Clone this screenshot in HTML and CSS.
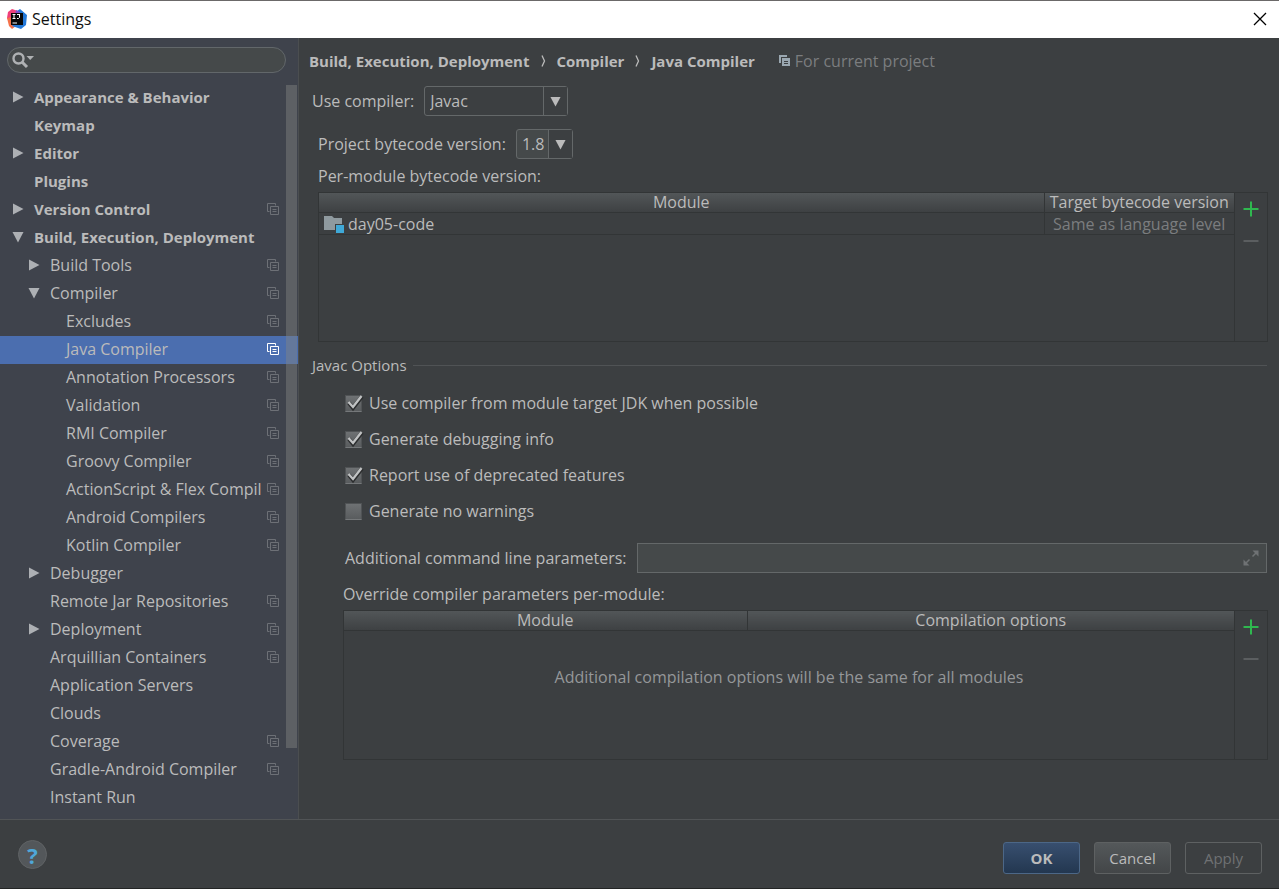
FILE: index.html
```html
<!DOCTYPE html>
<html lang="en">
<head>
    <meta charset="UTF-8">
    <meta name="viewport" content="width=device-width, initial-scale=1.0">
    <title>Settings</title>
    <link rel="stylesheet" href="styles.css">
</head>
<body>
    <svg class="sprite" width="0" height="0" aria-hidden="true">
        <symbol id="right" viewBox="0 0 12 12"><path d="M1 0.5 L11.5 6 L1 11.5 Z" fill="currentColor"/></symbol>
        <symbol id="down" viewBox="0 0 12 12"><path d="M0.5 1 H11.5 L6 11.5 Z" fill="currentColor"/></symbol>
        <symbol id="copy" viewBox="0 0 14 14">
            <path d="M3.5 9.5 H1.5 V1.5 H9.5 V3.5 M4.5 4.5 H12.5 V12.5 H4.5 Z M6.5 7.5 H10.5 M6.5 9.5 H10.5" fill="none" stroke="currentColor"/>
        </symbol>
        <symbol id="check" viewBox="0 0 20 20">
            <path d="M4 8 L8 13 L17 1.5" fill="none" stroke="#2b2d2e" stroke-width="4"/>
            <path d="M3.5 7 L8 12 L16.5 1" fill="none" stroke="#c0c2c3" stroke-width="2.4"/>
        </symbol>
        <symbol id="plus" viewBox="0 0 16 16"><path d="M8 0.5 V15.5 M0.5 8 H15.5" stroke="#2fb84f" stroke-width="2"/></symbol>
        <symbol id="minus" viewBox="0 0 16 16"><path d="M0.5 8 H15.5" stroke="#5b5e60" stroke-width="2"/></symbol>
    </svg>

    <header class="titlebar">
        <svg class="logo" width="20" height="20" viewBox="0 0 20 20" aria-hidden="true">
            <path d="M1 3 L5 0 L11 2 L10 10 L3 14 L0 9 Z" fill="#f0407a"/>
            <path d="M0 9 L5 8 L9 17 L5 20 L2 17 Z" fill="#f5724a"/>
            <path d="M10 2 L13 0 L20 6 L19 16 L14 20 L5 17 L11 9 Z" fill="#2479d8"/>
            <path d="M9 1 L13 3 L12 8 L8 6 Z" fill="#8650c8"/>
            <rect x="4" y="4" width="12" height="12" fill="#080808"/>
            <path d="M5.5 5.5 H8.5 M7 5.5 V9.5 M5.5 9.5 H8.5 M10 5.5 H13 M12.5 5.5 V8.5 L11.5 9.5 H10 M5.5 14 H10" fill="none" stroke="#fff"/>
        </svg>
        <span>Settings</span>
        <button class="close" aria-label="Close">
            <svg width="14" height="14" viewBox="0 0 14 14"><path d="M1 1 L13 13 M13 1 L1 13" stroke="#000" stroke-width="1.3"/></svg>
        </button>
    </header>

    <div class="content">
        <aside class="sidebar">
            <div class="search">
                <svg width="24" height="18" viewBox="0 0 24 18" aria-hidden="true">
                    <circle cx="6.5" cy="7.5" r="5" fill="none" stroke="#afb1b3" stroke-width="2.4"/>
                    <path d="M10 11 L15 16" stroke="#afb1b3" stroke-width="3"/>
                    <path d="M14.5 5 H22 L18.2 9 Z" fill="#afb1b3"/>
                </svg>
                <input type="text" aria-label="Search settings">
            </div>
            <nav class="tree">
                <a href="#" class="top"><svg class="arrow"><use href="#right"/></svg><span>Appearance &amp; Behavior</span></a>
                <a href="#" class="top leaf"><span>Keymap</span></a>
                <a href="#" class="top"><svg class="arrow"><use href="#right"/></svg><span>Editor</span></a>
                <a href="#" class="top leaf"><span>Plugins</span></a>
                <a href="#" class="top"><svg class="arrow"><use href="#right"/></svg><span>Version Control</span><svg class="copy"><use href="#copy"/></svg></a>
                <a href="#" class="top"><svg class="arrow"><use href="#down"/></svg><span>Build, Execution, Deployment</span></a>
                <a href="#" class="sub"><svg class="arrow"><use href="#right"/></svg><span>Build Tools</span><svg class="copy"><use href="#copy"/></svg></a>
                <a href="#" class="sub"><svg class="arrow"><use href="#down"/></svg><span>Compiler</span><svg class="copy"><use href="#copy"/></svg></a>
                <a href="#" class="item"><span>Excludes</span><svg class="copy"><use href="#copy"/></svg></a>
                <a href="#" class="item selected"><span>Java Compiler</span><svg class="copy"><use href="#copy"/></svg></a>
                <a href="#" class="item"><span>Annotation Processors</span><svg class="copy"><use href="#copy"/></svg></a>
                <a href="#" class="item"><span>Validation</span><svg class="copy"><use href="#copy"/></svg></a>
                <a href="#" class="item"><span>RMI Compiler</span><svg class="copy"><use href="#copy"/></svg></a>
                <a href="#" class="item"><span>Groovy Compiler</span><svg class="copy"><use href="#copy"/></svg></a>
                <a href="#" class="item"><span>ActionScript &amp; Flex Compil</span><svg class="copy"><use href="#copy"/></svg></a>
                <a href="#" class="item"><span>Android Compilers</span><svg class="copy"><use href="#copy"/></svg></a>
                <a href="#" class="item"><span>Kotlin Compiler</span><svg class="copy"><use href="#copy"/></svg></a>
                <a href="#" class="sub"><svg class="arrow"><use href="#right"/></svg><span>Debugger</span></a>
                <a href="#" class="sub leaf"><span>Remote Jar Repositories</span><svg class="copy"><use href="#copy"/></svg></a>
                <a href="#" class="sub"><svg class="arrow"><use href="#right"/></svg><span>Deployment</span><svg class="copy"><use href="#copy"/></svg></a>
                <a href="#" class="sub leaf"><span>Arquillian Containers</span><svg class="copy"><use href="#copy"/></svg></a>
                <a href="#" class="sub leaf"><span>Application Servers</span></a>
                <a href="#" class="sub leaf"><span>Clouds</span></a>
                <a href="#" class="sub leaf"><span>Coverage</span><svg class="copy"><use href="#copy"/></svg></a>
                <a href="#" class="sub leaf"><span>Gradle-Android Compiler</span><svg class="copy"><use href="#copy"/></svg></a>
                <a href="#" class="sub leaf"><span>Instant Run</span></a>
                <div class="scrollbar"></div>
            </nav>
        </aside>

        <main class="page">
            <div class="breadcrumb">
                <b>Build, Execution, Deployment</b>
                <svg class="sep" width="5" height="12" viewBox="0 0 5 12"><path d="M1 0.5 L3.5 6 L1 11.5" fill="none" stroke="currentColor" stroke-width="1.3"/></svg>
                <b>Compiler</b>
                <svg class="sep" width="5" height="12" viewBox="0 0 5 12"><path d="M1 0.5 L3.5 6 L1 11.5" fill="none" stroke="currentColor" stroke-width="1.3"/></svg>
                <b>Java Compiler</b>
                <span class="scope">
                    <svg width="14" height="14" viewBox="0 0 14 14" aria-hidden="true">
                        <path d="M1 1 H9 V3 H3 V9 H1 Z" fill="#9aa7b0"/>
                        <path d="M4 4 H12 V12 H4 Z" fill="#9aa7b0"/>
                        <path d="M6 7.5 H10 M6 9.5 H10" stroke="#3c3f41"/>
                    </svg>
                    For current project
                </span>
            </div>

            <div class="field">
                <label for="compiler">Use compiler:</label>
                <div class="combo wide">
                    <select id="compiler"><option>Javac</option></select>
                    <span class="drop"><svg width="11" height="11"><use href="#down"/></svg></span>
                </div>
            </div>
            <div class="field indent">
                <label for="bytecode">Project bytecode version:</label>
                <div class="combo narrow">
                    <select id="bytecode"><option>1.8</option></select>
                    <span class="drop"><svg width="11" height="11"><use href="#down"/></svg></span>
                </div>
            </div>

            <div class="caption indent">Per-module bytecode version:</div>
            <div class="panel modules">
                <table>
                    <colgroup><col><col class="target"></colgroup>
                    <thead><tr><th>Module</th><th>Target bytecode version</th></tr></thead>
                    <tbody>
                        <tr>
                            <td>
                                <span class="module">
                                    <svg width="20" height="18" viewBox="0 0 20 18" aria-hidden="true">
                                        <path d="M0 1 H8 L10 3 H18 V15 H0 Z" fill="#8f9a9f"/>
                                        <rect x="11" y="9" width="9" height="9" fill="#3c3f41"/>
                                        <rect x="12" y="10" width="8" height="8" fill="#3fa9d8"/>
                                    </svg>
                                    day05-code
                                </span>
                            </td>
                            <td class="muted">Same as language level</td>
                        </tr>
                    </tbody>
                </table>
                <div class="tools">
                    <button aria-label="Add module"><svg width="16" height="16"><use href="#plus"/></svg></button>
                    <button aria-label="Remove module" disabled><svg width="16" height="16"><use href="#minus"/></svg></button>
                </div>
            </div>

            <h2 class="section">Javac Options</h2>
            <div class="options">
                <label class="check"><span class="box"><input type="checkbox" checked><svg><use href="#check"/></svg></span>Use compiler from module target JDK when possible</label>
                <label class="check"><span class="box"><input type="checkbox" checked><svg><use href="#check"/></svg></span>Generate debugging info</label>
                <label class="check"><span class="box"><input type="checkbox" checked><svg><use href="#check"/></svg></span>Report use of deprecated features</label>
                <label class="check"><span class="box"><input type="checkbox"><svg><use href="#check"/></svg></span>Generate no warnings</label>
            </div>

            <div class="params">
                <label for="params">Additional command line parameters:</label>
                <div class="textbox">
                    <input type="text" id="params">
                    <svg width="16" height="16" viewBox="0 0 16 16" aria-hidden="true">
                        <path d="M9.5 6.5 L14 2 M6.5 9.5 L2 14" stroke="#6f7274" stroke-width="1.5"/>
                        <path d="M9.5 0.5 H15.5 V6.5 Z M0.5 9.5 V15.5 H6.5 Z" fill="#6f7274"/>
                    </svg>
                </div>
            </div>

            <div class="caption override">Override compiler parameters per-module:</div>
            <div class="panel overrides">
                <div class="grid">
                    <table>
                        <colgroup><col class="name"><col></colgroup>
                        <thead><tr><th>Module</th><th>Compilation options</th></tr></thead>
                    </table>
                    <p class="empty">Additional compilation options will be the same for all modules</p>
                </div>
                <div class="tools">
                    <button aria-label="Add override"><svg width="16" height="16"><use href="#plus"/></svg></button>
                    <button aria-label="Remove override" disabled><svg width="16" height="16"><use href="#minus"/></svg></button>
                </div>
            </div>
        </main>
    </div>

    <footer class="footer">
        <button class="help" aria-label="Help">?</button>
        <button class="btn primary">OK</button>
        <button class="btn">Cancel</button>
        <button class="btn" disabled>Apply</button>
    </footer>
</body>
</html>
```
FILE: styles.css
```css
* {
    box-sizing: border-box;
}
body {
    margin: 0;
    min-height: 100vh;
    display: flex;
    flex-direction: column;
    background: #3c3f41;
    color: #bbbbbb;
    font-family: "Open Sans", "Noto Sans", sans-serif;
    font-size: 16px;
    line-height: 20px;
    border-bottom: 1px solid #232525;
}
button, input, select {
    font: inherit;
    color: inherit;
    margin: 0;
    padding: 0;
    border: none;
    background: none;
}
svg {
    flex: none;
    display: block;
}
.sprite {
    position: absolute;
}

/* title bar */
.titlebar {
    display: flex;
    align-items: center;
    gap: 5px;
    height: 38px;
    padding: 0 12px 2px 7px;
    background: #ffffff;
    color: #111111;
    border-top: 1px solid #6b6969;
}
.close {
    margin-left: auto;
}

.content {
    flex: 1;
    display: flex;
}

/* sidebar */
.sidebar {
    width: 299px;
    flex: none;
    background: #3f434c;
    border-right: 1px solid #4b4e50;
}
.search {
    display: flex;
    align-items: center;
    height: 26px;
    margin: 9px 12px 11px 7px;
    padding-left: 4px;
    background: #45494a;
    border: 1px solid #62676a;
    border-radius: 13px;
}
.search input {
    flex: 1;
    min-width: 0;
}
.tree {
    position: relative;
    padding-bottom: 7px;
}
.tree a {
    display: flex;
    align-items: center;
    height: 28px;
    padding-right: 18px;
    padding-bottom: 2px;
    color: inherit;
    text-decoration: none;
}
.tree span {
    flex: 1;
    white-space: nowrap;
}
.tree .top {
    padding-left: 12px;
    font-size: 15px;
    font-weight: bold;
}
.tree .top.leaf {
    padding-left: 34px;
}
.tree .sub {
    padding-left: 28px;
}
.tree .sub.leaf {
    padding-left: 50px;
}
.tree .item {
    padding-left: 66px;
}
.tree .selected {
    background: #4b6eaf;
}
.arrow {
    width: 12px;
    height: 12px;
    margin-right: 10px;
    color: #adb0b4;
}
.copy {
    width: 14px;
    height: 14px;
    color: #6d7076;
}
.selected .copy {
    color: #ffffff;
}
.scrollbar {
    position: absolute;
    top: 1px;
    right: 1px;
    bottom: 71px;
    width: 11px;
    background: rgba(130, 134, 130, 0.45);
}

/* settings page */
.page {
    flex: 1;
    min-width: 0;
    padding: 13px 12px 0 13px;
}
.breadcrumb {
    display: flex;
    align-items: center;
    margin: 0 0 15px -3px;
}
.breadcrumb b {
    font-size: 15px;
}
.sep {
    margin: 0 11px;
}
.scope {
    display: flex;
    align-items: center;
    gap: 3px;
    margin-left: 23px;
    color: #7b7d7f;
}
.field {
    display: flex;
    align-items: center;
    gap: 10px;
    margin-bottom: 13px;
}
.indent {
    margin-left: 6px;
}
.combo {
    position: relative;
    height: 30px;
    border: 1px solid #646869;
    border-radius: 3px;
}
.combo select {
    appearance: none;
    width: 100%;
    height: 28px;
    padding-left: 5px;
}
.combo.wide {
    width: 144px;
}
.combo.narrow {
    width: 57px;
    background: #45494a;
}
.drop {
    position: absolute;
    top: 0;
    right: 0;
    bottom: 0;
    width: 24px;
    display: flex;
    align-items: center;
    justify-content: center;
    background: #3c3f41;
    border-left: 1px solid #646869;
    pointer-events: none;
}
.caption {
    margin-top: -6px;
}
.panel {
    display: flex;
    align-items: flex-start;
    height: 150px;
    border: 1px solid #323536;
}
.modules {
    margin: 6px -1px 13px 6px;
}
table {
    flex: 1;
    width: 100%;
    table-layout: fixed;
    border-collapse: collapse;
}
th, td {
    padding: 0;
    border-bottom: 1px solid #323536;
    text-align: center;
    font-weight: normal;
    white-space: nowrap;
}
th {
    height: 19px;
    line-height: 19px;
    background: linear-gradient(#525658, #3e4143);
}
td {
    height: 22px;
}
th + th, td + td {
    border-left: 1px solid #323536;
}
.target {
    width: 190px;
}
.name {
    width: 403px;
}
.module {
    display: flex;
    align-items: center;
    gap: 4px;
    padding-left: 5px;
}
.muted {
    color: #7b7d7f;
}
.tools {
    align-self: stretch;
    width: 33px;
    display: flex;
    flex-direction: column;
    align-items: center;
    gap: 16px;
    padding-top: 8px;
    border-left: 1px solid #323536;
}

.section {
    display: flex;
    align-items: center;
    gap: 6px;
    margin: 0 0 10px;
    font-size: 15px;
    font-weight: normal;
}
.section::after {
    content: "";
    flex: 1;
    height: 1px;
    background: #505355;
}
.options {
    display: flex;
    flex-direction: column;
    align-items: flex-start;
    margin-left: 33px;
}
.check {
    display: flex;
    align-items: center;
    gap: 7px;
    height: 36px;
}
.box {
    display: grid;
    width: 17px;
    height: 17px;
}
.box > * {
    grid-area: 1 / 1;
}
.box input {
    appearance: none;
    width: 17px;
    height: 17px;
    background: linear-gradient(#6e7173, #595c5e);
    border: 1px solid #505355;
    border-bottom-color: #75787a;
}
.box svg {
    width: 20px;
    height: 20px;
    display: none;
    pointer-events: none;
}
.box input:checked + svg {
    display: block;
}
.params {
    display: flex;
    align-items: center;
    gap: 10px;
    margin: 14px 0 17px 33px;
}
.textbox {
    flex: 1;
    display: flex;
    align-items: center;
    height: 30px;
    padding: 0 7px;
    background: #45494a;
    border: 1px solid #646869;
}
.textbox input {
    flex: 1;
    min-width: 0;
}
.override {
    margin-left: 31px;
}
.overrides {
    margin: 6px -1px 0 31px;
}
.grid {
    flex: 1;
}
.empty {
    margin: 36px 0 0;
    text-align: center;
    color: #959799;
}

/* footer */
.footer {
    display: flex;
    align-items: center;
    gap: 14px;
    height: 69px;
    padding: 8px 17px 0 18px;
    border-top: 1px solid #515456;
}
.help {
    align-self: flex-start;
    width: 29px;
    height: 29px;
    margin: 12px auto 0 0;
    border: 1px solid #606365;
    border-radius: 50%;
    background: #53575a;
    color: #4fa7d8;
    font-size: 22px;
    font-weight: bold;
}
.btn {
    width: 77px;
    height: 32px;
    border: 1px solid #5e6162;
    border-radius: 3px;
    background: linear-gradient(#54585a, #434648);
    font-size: 15px;
}
.btn.primary {
    border-color: #4c6787;
    background: linear-gradient(#384f6f, #233750);
    font-weight: bold;
}
.btn:disabled {
    background: none;
    color: #6f7173;
}
```
